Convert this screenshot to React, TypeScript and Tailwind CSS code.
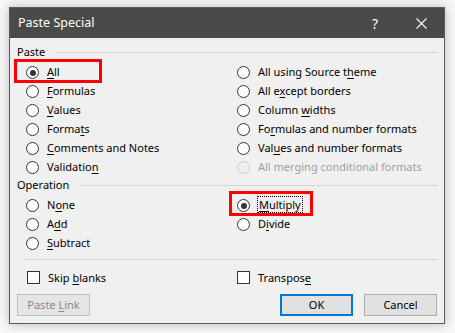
const LEFT = [
  { pre: '', key: 'A', post: 'll', checked: true, box: true },
  { pre: '', key: 'F', post: 'ormulas' },
  { pre: '', key: 'V', post: 'alues' },
  { pre: 'Forma', key: 't', post: 's' },
  { pre: '', key: 'C', post: 'omments and Notes' },
  { pre: 'Validatio', key: 'n', post: '' },
]

const RIGHT = [
  { pre: 'All using Source t', key: 'h', post: 'eme' },
  { pre: 'All e', key: 'x', post: 'cept borders' },
  { pre: 'Column ', key: 'w', post: 'idths' },
  { pre: 'Fo', key: 'r', post: 'mulas and number formats' },
  { pre: 'Val', key: 'u', post: 'es and number formats' },
  { pre: 'All merging conditional formats', key: '', post: '', disabled: true },
]

const OPS_LEFT = [
  { pre: 'N', key: 'o', post: 'ne' },
  { pre: 'A', key: 'd', post: 'd' },
  { pre: '', key: 'S', post: 'ubtract' },
]

const OPS_RIGHT = [
  { pre: '', key: 'M', post: 'ultiply', checked: true, box: true, focus: true },
  { pre: 'D', key: 'i', post: 'vide' },
]

type Opt = {
  pre: string
  key: string
  post: string
  checked?: boolean
  disabled?: boolean
  box?: boolean
  focus?: boolean
}

function Label({ o }: { o: Opt }) {
  return (
    <span
      className={
        o.focus
          ? 'outline outline-1 outline-dotted outline-black px-[1px] leading-[14px]'
          : 'leading-[14px]'
      }
    >
      {o.pre}
      {o.key && <span className="underline underline-offset-2">{o.key}</span>}
      {o.post}
    </span>
  )
}

function Radio({ o, boxClass }: { o: Opt; boxClass?: string }) {
  return (
    <div className="relative flex h-[19px] items-center gap-[8px]">
      <span
        className={
          o.disabled
            ? 'flex h-[13px] w-[13px] items-center justify-center rounded-full border border-[#cccccc] bg-[#f0f0f0]'
            : 'flex h-[13px] w-[13px] items-center justify-center rounded-full border border-[#333333] bg-white'
        }
      >
        {o.checked && <span className="h-[6px] w-[6px] rounded-full bg-[#333333]" />}
      </span>
      <span className={o.disabled ? 'text-[#a0a0a0]' : 'text-black'}>
        <Label o={o} />
      </span>
      {o.box && <div className={boxClass} />}
    </div>
  )
}

function GroupHead({ title }: { title: string }) {
  return (
    <div className="flex h-[16px] items-center gap-[10px] pl-[7px] pr-[6px]">
      <span>{title}</span>
      <div className="h-px flex-1 bg-[#d5d5d5]" />
    </div>
  )
}

function Check({ o }: { o: Opt }) {
  return (
    <div className="flex h-[19px] items-center gap-[8px]">
      <span className="h-[13px] w-[13px] border border-[#333333] bg-white" />
      <Label o={o} />
    </div>
  )
}

export default function App() {
  return (
    <div className="h-[333px] w-[455px] bg-[#f7f7f7] pl-[9px] pt-[7px]">
      <div
        className="flex h-[317px] w-[436px] flex-col border border-[#5a5a5a] bg-[#f0f0f0] text-[11px] text-black shadow-[0_0_10px_rgba(0,0,0,0.25)]"
        style={{ fontFamily: '"Noto Sans", "Open Sans", sans-serif' }}
      >
        {/* title bar */}
        <div className="flex h-[30px] items-center bg-[#4a4a48] pl-[8px] text-white">
          <span className="flex-1 text-[12.5px]">Paste Special</span>
          <span className="w-[46px] text-center text-[14px]">?</span>
          <span className="flex w-[46px] items-center justify-center">
            <svg width="11" height="11" viewBox="0 0 11 11">
              <path d="M0.5 0.5 L10.5 10.5 M10.5 0.5 L0.5 10.5" stroke="white" strokeWidth="1.1" />
            </svg>
          </span>
        </div>

        <div className="pt-[6px]">
          <GroupHead title="Paste" />
          <div className="mt-[3px] flex pl-[16px]">
            <div className="w-[211px]">
              {LEFT.map((o, i) => (
                <Radio
                  key={i}
                  o={o}
                  boxClass="absolute left-[-12px] top-[-4px] h-[24px] w-[88px] border-[3px] border-[#ff0000]"
                />
              ))}
            </div>
            <div>
              {RIGHT.map((o, i) => (
                <Radio key={i} o={o} />
              ))}
            </div>
          </div>

          <GroupHead title="Operation" />
          <div className="mt-[3px] flex pl-[16px]">
            <div className="w-[211px]">
              {OPS_LEFT.map((o, i) => (
                <Radio key={i} o={o} />
              ))}
            </div>
            <div>
              {OPS_RIGHT.map((o, i) => (
                <Radio
                  key={i}
                  o={o}
                  boxClass="absolute left-[-8px] top-[-5px] h-[25px] w-[84px] border-[3px] border-[#ff0000]"
                />
              ))}
            </div>
          </div>

          <div className="ml-[15px] mr-[6px] mt-[6px] h-px bg-[#d5d5d5]" />

          <div className="mt-[8px] flex pl-[17px]">
            <div className="w-[210px]">
              <Check o={{ pre: 'Skip ', key: 'b', post: 'lanks' }} />
            </div>
            <Check o={{ pre: 'Transpos', key: 'e', post: '' }} />
          </div>

          <div className="mt-[7px] flex items-center pl-[7px] pr-[7px]">
            <button className="h-[22px] w-[73px] border border-[#bfbfbf] bg-[#e5e5e5] text-[#8a8a8a]">
              Paste <span className="underline underline-offset-2">L</span>ink
            </button>
            <div className="flex-1" />
            <button className="h-[22px] w-[73px] border-2 border-[#0078d7] bg-[#e1e1e1]">OK</button>
            <button className="ml-[11px] h-[22px] w-[73px] border border-[#adadad] bg-[#e1e1e1]">
              Cancel
            </button>
          </div>
        </div>
      </div>
    </div>
  )
}
